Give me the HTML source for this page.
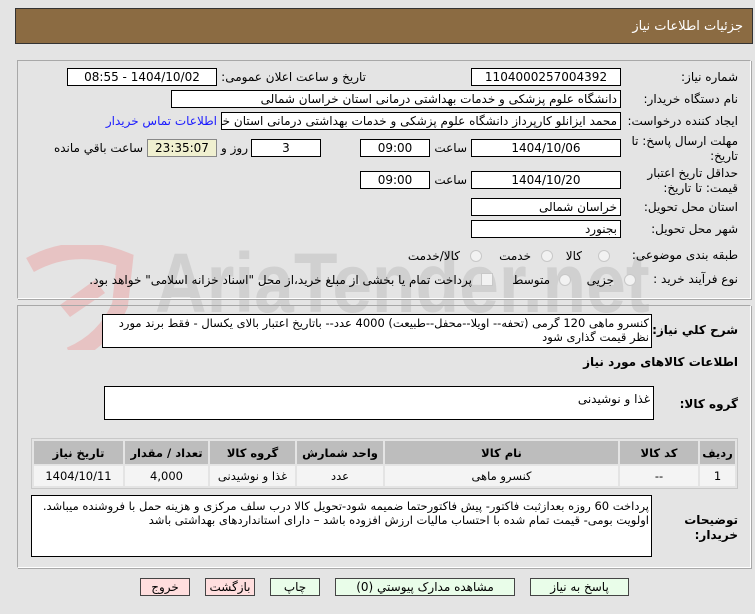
<!DOCTYPE html>
<html><head><meta charset="utf-8"><style>
*{box-sizing:border-box;margin:0;padding:0}
body{width:755px;height:614px;background:#e4e4e4;font-family:"DejaVu Sans","Liberation Sans",sans-serif;font-size:12px;color:#000;position:relative;overflow:hidden}
.a{position:absolute;white-space:nowrap}
.box{position:absolute;background:#fff;border:1px solid #000;direction:rtl;text-align:center;font-size:12px;line-height:16px;padding:0 3px;overflow:hidden;white-space:nowrap}
.l{position:absolute;direction:rtl;text-align:right;white-space:nowrap;font-size:12px}
.panel{position:absolute;border:1px solid #a8a8a8;border-right-color:#fff;border-bottom-color:#fff;box-shadow:1px 1px 0 #a8a8a8}
.radio{position:absolute;width:12px;height:12px;border-radius:50%;border:1px solid #c8c8c8;background:#f2f2f2}
.btn{position:absolute;height:18px;border:1px solid #444;text-align:center;line-height:16px;font-size:12px;direction:rtl}
table{border-collapse:separate;border-spacing:2px}
td{text-align:center;font-size:11.5px}
</style></head><body>
<!-- watermark -->
<div class="a" style="left:0;top:230px;width:755px;height:120px;overflow:hidden">
<svg class="a" style="left:15px;top:15px" width="200" height="110" viewBox="0 0 200 110"><path d="M15 20 Q60 -5 110 15 L105 60 Q90 95 55 110" fill="none" stroke="#e7c3c3" stroke-width="16"/><path d="M45 60 L80 35 L90 48 L55 72Z" fill="#e7c3c3"/></svg>
<div class="a" style="left:155px;top:5px;font-size:84px;font-weight:bold;color:#d0d0d0;font-family:'Liberation Sans',sans-serif;transform:scaleX(0.85);transform-origin:left top">AriaTender.net</div>
</div>

<div class="a" style="left:15px;top:8px;width:738px;height:36px;background:#8b6b42;border:1px solid #333"></div>
<div class="l" style="right:12px;top:19px;color:#fff;font-size:13px">جزئیات اطلاعات نیاز</div>

<div class="panel" style="left:17px;top:60px;width:734px;height:239px"></div>
<div class="panel" style="left:17px;top:305px;width:734px;height:263px"></div>

<div class="l" style="right:17px;top:70px">شماره نیاز:</div>
<div class="box" style="left:471px;top:68px;width:150px;height:18px">1104000257004392</div>
<div class="l" style="right:389px;top:70px">تاریخ و ساعت اعلان عمومی:</div>
<div class="box" style="left:67px;top:68px;width:150px;height:18px">1404/10/02 - 08:55</div>

<div class="l" style="right:17px;top:92px">نام دستگاه خریدار:</div>
<div class="box" style="left:171px;top:90px;width:450px;height:18px;text-align:right">دانشگاه علوم پزشکی و خدمات بهداشتی درمانی استان خراسان شمالی</div>

<div class="l" style="right:17px;top:114px">ایجاد کننده درخواست:</div>
<div class="box" style="left:221px;top:112px;width:400px;height:18px;text-align:right">محمد ایزانلو کارپرداز دانشگاه علوم پزشکی و خدمات بهداشتی درمانی استان خراسان</div>
<div class="l" style="right:538px;top:114px;color:#1a1aff">اطلاعات تماس خریدار</div>

<div class="l" style="right:17px;top:134px">مهلت ارسال پاسخ: تا</div>
<div class="l" style="right:17px;top:149px">تاریخ:</div>
<div class="box" style="left:471px;top:139px;width:150px;height:18px">1404/10/06</div>
<div class="l" style="right:288px;top:141px">ساعت</div>
<div class="box" style="left:360px;top:139px;width:70px;height:18px">09:00</div>
<div class="box" style="left:251px;top:139px;width:70px;height:18px">3</div>
<div class="l" style="right:507px;top:141px">روز و</div>
<div class="box" style="left:147px;top:139px;width:70px;height:18px;background:#f0f0d0;border-color:#888">23:35:07</div>
<div class="l" style="right:612px;top:141px">ساعت باقي مانده</div>

<div class="l" style="right:17px;top:166px">حداقل تاریخ اعتبار</div>
<div class="l" style="right:17px;top:181px">قیمت: تا تاریخ:</div>
<div class="box" style="left:471px;top:171px;width:150px;height:18px">1404/10/20</div>
<div class="l" style="right:288px;top:173px">ساعت</div>
<div class="box" style="left:360px;top:171px;width:70px;height:18px">09:00</div>

<div class="l" style="right:17px;top:200px">استان محل تحویل:</div>
<div class="box" style="left:471px;top:198px;width:150px;height:18px;text-align:right">خراسان شمالی</div>
<div class="l" style="right:17px;top:222px">شهر محل تحویل:</div>
<div class="box" style="left:471px;top:220px;width:150px;height:18px;text-align:right">بجنورد</div>

<div class="l" style="right:17px;top:248px">طبقه بندی موضوعی:</div>
<div class="radio" style="left:598px;top:250px"></div><div class="l" style="right:173px;top:249px">کالا</div>
<div class="radio" style="left:541px;top:250px"></div><div class="l" style="right:224px;top:249px">خدمت</div>
<div class="radio" style="left:470px;top:250px"></div><div class="l" style="right:295px;top:249px">کالا/خدمت</div>

<div class="l" style="right:17px;top:272px">نوع فرآیند خرید :</div>
<div class="radio" style="left:624px;top:274px"></div><div class="l" style="right:141px;top:273px">جزیی</div>
<div class="radio" style="left:559px;top:274px"></div><div class="l" style="right:205px;top:273px">متوسط</div>
<div class="a" style="left:481px;top:273px;width:12px;height:13px;border:1px solid #c8c8c8;background:#f2f2f2"></div>
<div class="l" style="right:283px;top:273px">پرداخت تمام یا بخشی از مبلغ خرید،از محل "اسناد خزانه اسلامی" خواهد بود.</div>

<div class="l" style="right:17px;top:323px;font-weight:bold">شرح کلي نیاز:</div>
<div class="box" style="left:102px;top:314px;width:550px;height:34px;text-align:right;white-space:normal;line-height:14px;padding:1px 2px 0;font-size:11.5px;letter-spacing:-0.2px">کنسرو ماهی 120 گرمی (تحفه-- اویلا--محفل--طبیعت) 4000 عدد-- باتاریخ اعتبار بالای یکسال - فقط برند مورد نظر قیمت گذاری شود</div>

<div class="l" style="right:17px;top:355px;font-weight:bold">اطلاعات کالاهای مورد نیاز</div>
<div class="l" style="right:17px;top:397px;font-weight:bold">گروه کالا:</div>
<div class="box" style="left:104px;top:386px;width:550px;height:34px;text-align:right;padding-top:4px">غذا و نوشیدنی</div>

<div class="a" style="left:31px;top:438px;width:707px;height:51px;border:1px solid #c8c8c8">
<table style="width:705px">
<tr style="background:#bdbdbd;font-weight:bold;height:23px"><td style="width:89px">تاریخ نیاز</td><td style="width:83px">تعداد / مقدار</td><td style="width:85px">گروه کالا</td><td style="width:86px">واحد شمارش</td><td style="width:233px">نام کالا</td><td style="width:78px">کد کالا</td><td>ردیف</td></tr>
<tr style="background:#f4f4f4;height:20px"><td>1404/10/11</td><td>4,000</td><td>غذا و نوشیدنی</td><td>عدد</td><td>کنسرو ماهی</td><td>--</td><td>1</td></tr>
</table></div>

<div class="l" style="right:17px;top:513px;font-weight:bold">توضیحات</div>
<div class="l" style="right:17px;top:528px;font-weight:bold">خریدار:</div>
<div class="box" style="left:31px;top:495px;width:621px;height:62px;text-align:right;white-space:normal;line-height:14px;padding:3px 2px 0;font-size:11.5px;letter-spacing:-0.2px">پرداخت 60 روزه بعدازثبت فاکتور- پیش فاکتورحتما ضمیمه شود-تحویل کالا درب سلف مرکزی و هزینه حمل با فروشنده میباشد. اولویت بومی-  قیمت  تمام شده با احتساب مالیات ارزش افزوده باشد – دارای استانداردهای بهداشتی باشد</div>

<div class="btn" style="left:530px;top:578px;width:99px;background:#e9fde9">پاسخ به نیاز</div>
<div class="btn" style="left:335px;top:578px;width:180px;background:#e9fde9">مشاهده مدارک پیوستي (0)</div>
<div class="btn" style="left:270px;top:578px;width:50px;background:#e9fde9">چاپ</div>
<div class="btn" style="left:205px;top:578px;width:50px;background:#ffdede">بازگشت</div>
<div class="btn" style="left:140px;top:578px;width:50px;background:#ffdede">خروج</div>
</body></html>
